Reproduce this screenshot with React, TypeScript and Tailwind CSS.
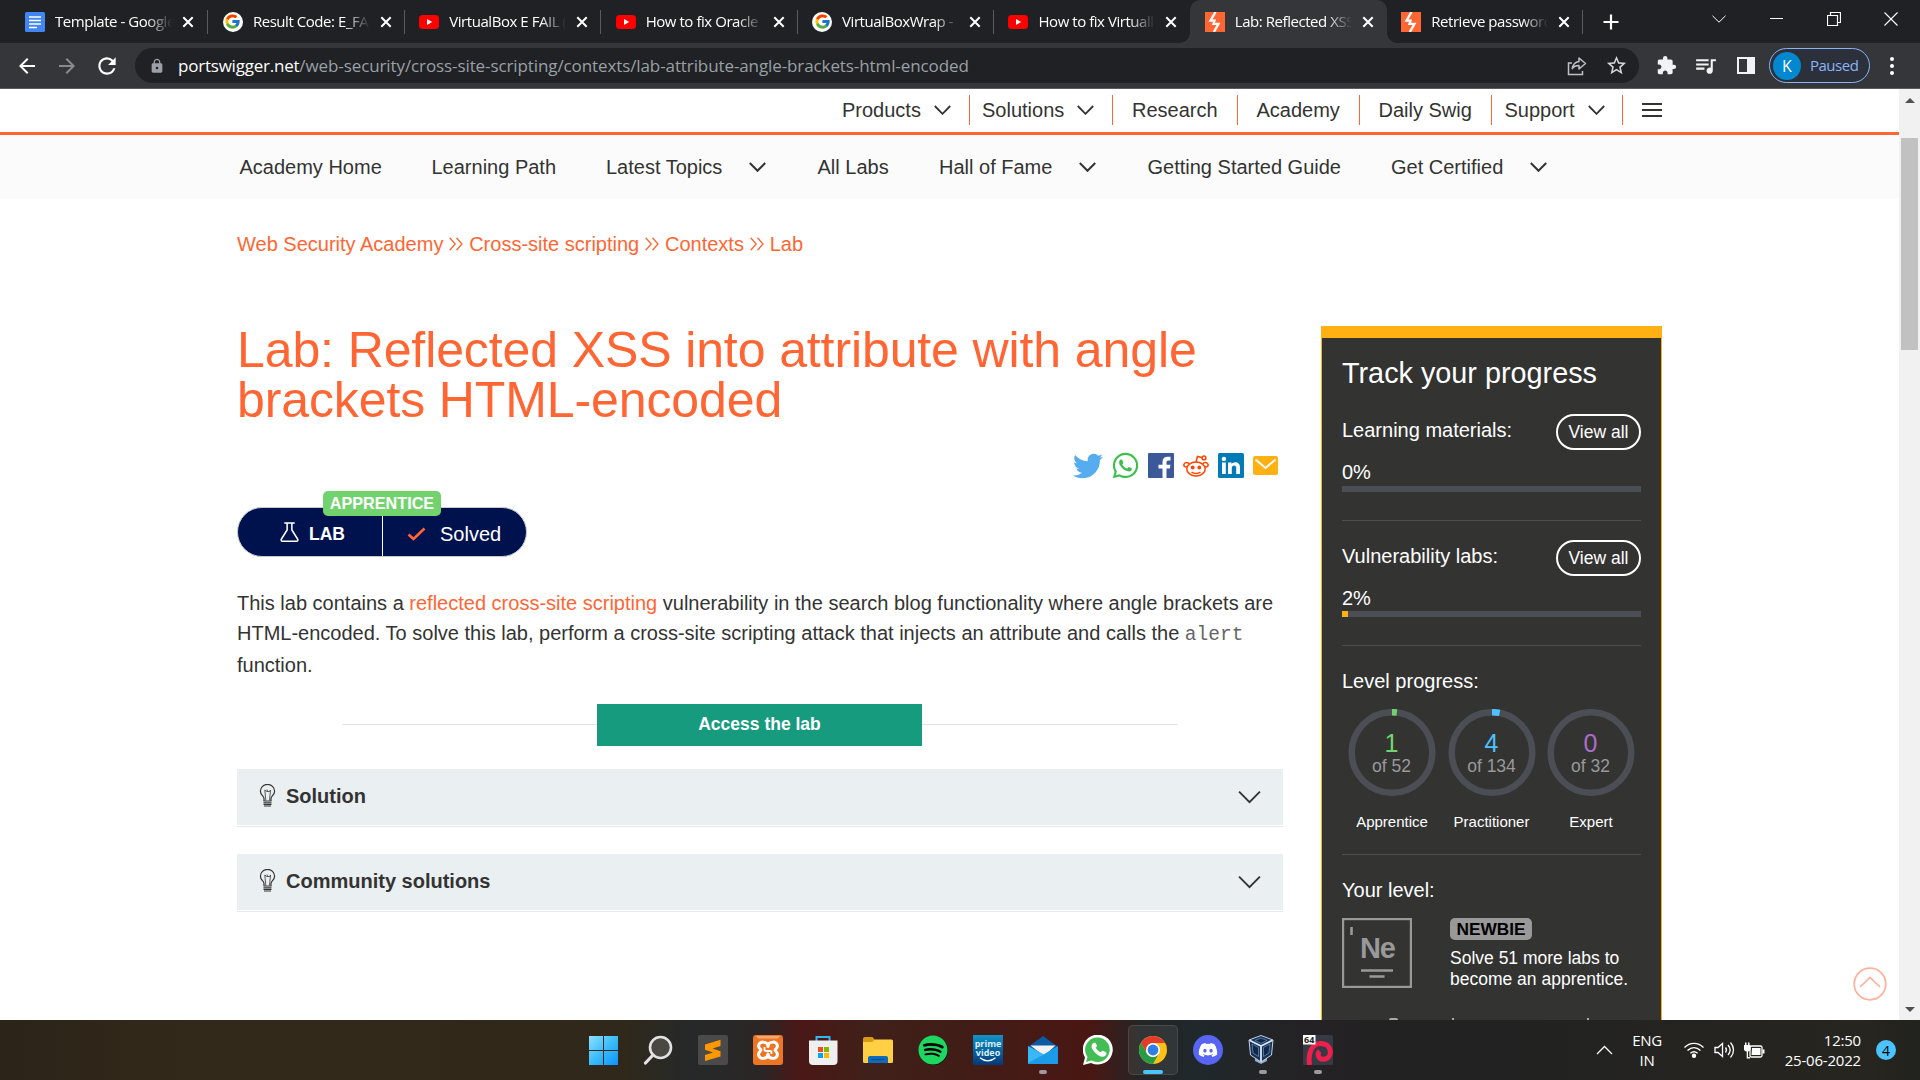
import React from "react";
import { FaTwitter, FaWhatsapp, FaSpotify, FaDiscord } from "react-icons/fa";
import { FcGoogle } from "react-icons/fc";
import { MdExtension, MdLock, MdQueueMusic, MdRefresh, MdStarBorder, MdArrowBack, MdArrowForward } from "react-icons/md";

const UI = "font-['Open_Sans','Noto_Sans',sans-serif]";

function DocsIcon() {
  return (
    <svg width="20" height="20" viewBox="0 0 20 20">
      <rect width="20" height="20" rx="1.5" fill="#4285f4" />
      <path d="M4 5h12M4 8.5h12M4 12h12M4 15.5h8" stroke="#fff" strokeWidth="1.7" />
    </svg>
  );
}
function GoogleIcon() {
  return (
    <span className="flex size-5 items-center justify-center rounded-full bg-white">
      <FcGoogle size={17} />
    </span>
  );
}
function YouTubeIcon() {
  return (
    <svg width="20" height="20" viewBox="0 0 20 20">
      <rect y="3" width="20" height="14" rx="3.5" fill="#f00" />
      <path d="M8 7l5.2 3L8 13z" fill="#fff" />
    </svg>
  );
}
function SwiggerIcon() {
  return (
    <svg width="20" height="20" viewBox="0 0 20 20">
      <rect width="20" height="20" fill="#ff6633" />
      <path d="M10.5 0L5.5 8.6h4l-1 3.2h5L8.8 20" fill="none" stroke="#fff" strokeWidth="2.3" />
    </svg>
  );
}

const tabs: { icon: React.ReactNode; title: string; active?: boolean; sep?: boolean }[] = [
  { icon: <DocsIcon />, title: "Template - Google", sep: true },
  { icon: <GoogleIcon />, title: "Result Code: E_FAIL", sep: true },
  { icon: <YouTubeIcon />, title: "VirtualBox E FAIL (", sep: true },
  { icon: <YouTubeIcon />, title: "How to fix Oracle", sep: true },
  { icon: <GoogleIcon />, title: "VirtualBoxWrap -", sep: true },
  { icon: <YouTubeIcon />, title: "How to fix Virtuall" },
  { icon: <SwiggerIcon />, title: "Lab: Reflected XSS", active: true },
  { icon: <SwiggerIcon />, title: "Retrieve password", sep: true },
];

function TabStrip() {
  return (
    <div className="flex h-[43px] bg-[#202124] pl-3">
      {tabs.map((t, i) => (
        <div
          key={t.title}
          className={
            t.active
              ? "relative flex w-[196.4px] shrink-0 items-center rounded-t-[10px] bg-[#35363a] pl-[14.5px]"
              : i === 0
                ? "relative flex w-[196.4px] shrink-0 items-center pl-[13px]"
                : "relative flex w-[196.4px] shrink-0 items-center pl-[14.5px]"
          }
        >
          {t.active && (
            <>
              <span className="absolute bottom-0 -left-2.5 size-2.5 bg-[radial-gradient(circle_at_0_0,transparent_9.5px,#35363a_10px)]" />
              <span className="absolute -right-2.5 bottom-0 size-2.5 bg-[radial-gradient(circle_at_100%_0,transparent_9.5px,#35363a_10px)]" />
            </>
          )}
          <span className="flex size-5 shrink-0">{t.icon}</span>
          <span className="ml-2.5 w-[117px] overflow-hidden text-[15px] tracking-[-0.45px] whitespace-nowrap text-white [mask-image:linear-gradient(to_right,#000_78%,transparent_100%)]">
            {t.title}
          </span>
          <svg className="ml-[10px] shrink-0" width="12" height="12" viewBox="0 0 12 12">
            <path d="M1.3 1.3l9.4 9.4M10.7 1.3l-9.4 9.4" stroke="#fff" strokeWidth="2" />
          </svg>
          {t.sep && <span className="absolute top-[10px] right-0 h-6 w-px bg-[#5a5c60]" />}
        </div>
      ))}
      <div className="flex w-[56px] items-center justify-center">
        <svg width="16" height="16" viewBox="0 0 16 16">
          <path d="M8 0.5v15M0.5 8h15" stroke="#fff" strokeWidth="2.2" />
        </svg>
      </div>
      <div className="mb-[6px] ml-[51px] flex flex-1 items-center text-white">
        <span className="flex w-[57.5px] justify-center">
          <svg width="14" height="8" viewBox="0 0 14 8"><path d="M.5 .8L7 7.2 13.5 .8" fill="none" stroke="currentColor" /></svg>
        </span>
        <span className="flex w-[57.5px] justify-center">
          <span className="h-px w-[13px] bg-white" />
        </span>
        <span className="flex w-[57.5px] justify-center">
          <svg width="14" height="14" viewBox="0 0 14 14"><path d="M.5 3.5h10v10h-10zM3.5 3V.5h10v10H11" fill="none" stroke="currentColor" strokeWidth="1.2" /></svg>
        </span>
        <span className="flex w-[57.5px] justify-center">
          <svg width="14" height="14" viewBox="0 0 14 14"><path d="M.5 .5l13 13M13.5 .5l-13 13" stroke="currentColor" strokeWidth="1.1" /></svg>
        </span>
      </div>
    </div>
  );
}

function Toolbar() {
  return (
    <div className="flex h-[46px] items-center border-b border-[#5b5c60] bg-[#35363a] text-white">
      <div className="flex w-[135px] items-center pl-[15px]">
        <MdArrowBack size={24} />
        <MdArrowForward size={24} className="ml-4 text-[#8a8b8e]" />
        <MdRefresh size={26} className="ml-[15px]" />
      </div>
      <div className="flex h-[35px] w-[1504px] items-center rounded-full bg-[#202124] pl-[14px]">
        <MdLock size={16} className="text-[#9aa0a6]" />
        <span className="ml-[13px] w-[800px] text-[17px] tracking-[-0.1px] whitespace-nowrap text-[#9aa0a6]">
          <span className="tracking-[-0.22px] text-white">portswigger.net</span>/web-security/cross-site-scripting/contexts/lab-attribute-angle-brackets-html-encoded
        </span>
        <svg className="ml-auto" width="20" height="20" viewBox="0 0 20 20" fill="none" stroke="#bdc1c6" strokeWidth="1.5">
          <path d="M5 7H1.5v11.5h14V15" />
          <path d="M12 2l6.5 5.5L12 13v-3.4c-3 0-5.200 .9-6.700 3.100 .5-4 2.800-6.700 6.700-7.300z" strokeLinejoin="round" />
        </svg>
        <MdStarBorder size={23} className="mr-[11px] ml-[18px] text-[#d5d7da]" />
      </div>
      <MdExtension size={21} className="ml-[17px] text-[#f1f3f4]" />
      <MdQueueMusic size={25} className="ml-[16px] text-[#f1f3f4]" />
      <span className="ml-[19px] box-border h-[17px] w-[18px] border-[2.5px] border-r-[8px] border-[#f1f3f4]" />
      <div className="ml-[14px] flex h-[35px] w-[101px] items-center rounded-full border-[1.500px] border-[#8ab4f8] bg-[#2c303a] pl-[3px]">
        <span className="flex size-7 items-center justify-center rounded-full bg-[#0288d1] text-[16px]">K</span>
        <span className="ml-[9px] text-[15px] tracking-[-0.5px] text-[#8ab4f8]">Paused</span>
      </div>
      <div className="ml-5 flex flex-col gap-[3px]">
        <span className="size-1 rounded-full bg-white" />
        <span className="size-1 rounded-full bg-white" />
        <span className="size-1 rounded-full bg-white" />
      </div>
    </div>
  );
}

function Down({ w = 17, h = 10, s = 1.8 }: { w?: number; h?: number; s?: number }) {
  return (
    <svg width={w} height={h} viewBox="0 0 17 10" className="shrink-0">
      <path d="M.8 1L8.500 8.800 16.200 1" fill="none" stroke="#333332" strokeWidth={s} />
    </svg>
  );
}

function TopNav() {
  return (
    <div className="flex h-[46px] border-b-[3px] border-[#ff6633] bg-white pt-[6px] pl-[842px] text-[20px] text-[#333332]">
      <div className="flex h-[30px] w-[128px] items-center border-r border-[#ff6633]">Products<span className="ml-[13px]"><Down /></span></div>
      <div className="flex h-[30px] w-[143px] items-center border-r border-[#ff6633] pl-3">Solutions<span className="ml-[13px]"><Down /></span></div>
      <div className="flex h-[30px] w-[125px] items-center border-r border-[#ff6633] pl-[19px]">Research</div>
      <div className="flex h-[30px] w-[122px] items-center border-r border-[#ff6633] pl-[18.5px]">Academy</div>
      <div className="flex h-[30px] w-[132px] items-center border-r border-[#ff6633] pl-[18.5px]">Daily Swig</div>
      <div className="flex h-[30px] w-[131px] items-center border-r border-[#ff6633] pl-[12.5px]">Support<span className="ml-[13px]"><Down /></span></div>
      <div className="ml-[19px] flex h-[30px] flex-col justify-center gap-[4px]">
        <span className="h-[2px] w-5 bg-[#333332]" />
        <span className="h-[2px] w-5 bg-[#333332]" />
        <span className="h-[2px] w-5 bg-[#333332]" />
      </div>
    </div>
  );
}

function SubNav() {
  return (
    <div className="flex h-16 items-center bg-[#fbfbfb] pl-[239.5px] text-[20px] whitespace-nowrap text-[#333332]">
      <span className="w-[192px]">Academy Home</span>
      <span className="w-[174.5px]">Learning Path</span>
      <span className="flex w-[211.5px] items-center">Latest Topics<span className="ml-[27px]"><Down s={2} /></span></span>
      <span className="w-[121.5px]">All Labs</span>
      <span className="flex w-[208.5px] items-center">Hall of Fame<span className="ml-[27px]"><Down s={2} /></span></span>
      <span className="w-[243.5px]">Getting Started Guide</span>
      <span className="flex items-center">Get Certified<span className="ml-[27px]"><Down s={2} /></span></span>
    </div>
  );
}

function Chevrons() {
  return (
    <svg width="14" height="14" viewBox="0 0 14 14" className="mx-[5.900px]">
      <path d="M.7 .7l5.500 6.300-5.500 6.300M7.500 .7L13 7l-5.500 6.300" fill="none" stroke="#ff6633" strokeWidth="1.300" />
    </svg>
  );
}

function Social() {
  return (
    <div className="mt-7 flex h-[25px] items-center pl-[836px]">
      <FaTwitter size={30} color="#55acee" className="shrink-0" />
      <FaWhatsapp size={29} color="#3cc04b" className="ml-2 shrink-0" />
      <svg className="ml-2 shrink-0" width="26" height="25" viewBox="0 0 26 25">
        <rect width="26" height="25" rx="1" fill="#3b5998" />
        <path d="M14.500 25v-9.500h-4v-3.800h4V9c0-3.500 2-5.200 5-5.200h3v3.600h-2c-1.600 0-2 .8-2 2v2.300h3.900l-.6 3.800h-3.300V25z" fill="#fff" />
      </svg>
      <svg className="ml-[9px] shrink-0" width="26" height="22" viewBox="0 0 26 22" fill="none" stroke="#ff4500" strokeWidth="1.500">
        <ellipse cx="13" cy="14" rx="9.200" ry="7" />
        <path d="M13 7l1.500-5.500 5 1.200M4.500 11.200C2.500 13 .4 11.300 1 9.300 1.800 7 5 7 6.200 8.700M21.500 11.200c2 1.800 4.100 .1 3.500-1.900C24.200 7 21 7 19.800 8.700M8.500 17c2.500 2 6.500 2 9 0" />
        <circle cx="21" cy="2.900" r="1.900" />
        <circle cx="9.700" cy="12.500" r="1.200" fill="#ff4500" />
        <circle cx="16.300" cy="12.500" r="1.200" fill="#ff4500" />
      </svg>
      <svg className="ml-[9px] shrink-0" width="26" height="25" viewBox="0 0 26 25">
        <rect width="26" height="25" rx="1.500" fill="#007bb5" />
        <path d="M4 9.500h3.800V21H4zM10 9.500h3.600v1.700c1.700-3 8.400-2.900 8.400 3V21h-3.800v-6c0-3.500-4.400-3.200-4.400 0v6H10z" fill="#fff" />
        <circle cx="5.900" cy="5.900" r="2.200" fill="#fff" />
      </svg>
      <svg className="ml-[9px] shrink-0" width="25" height="19" viewBox="0 0 25 19">
        <rect width="25" height="19" rx="2" fill="#ffb013" />
        <path d="M2.500 3.500l10 8.500 10-8.500" fill="none" stroke="#fff" strokeWidth="1.900" />
      </svg>
    </div>
  );
}

function LabBadge() {
  return (
    <div className="relative mt-[29px] flex h-[50px] w-[290px] items-center rounded-full border border-[#c5cbd0] bg-[#00124e] text-white">
      <div className="flex h-full w-[145px] items-center border-r border-white pl-[42px]">
        <svg width="19" height="20" viewBox="0 0 20 20" preserveAspectRatio="none" fill="none" stroke="#fff" strokeWidth="1.600">
          <path d="M4.500 1h11M7.500 1v7L1.500 17c-.8 1.300 0 2.200 1 2.200h15c1 0 1.800-.9 1-2.200l-6-9V1" />
        </svg>
        <span className="mt-1 ml-[10px] text-[17.500px] font-bold">LAB</span>
      </div>
      <svg className="mt-1 ml-[24px]" width="19" height="14" viewBox="0 0 19 14">
        <path d="M1.500 7.500l5 4.500L17.500 1.500" fill="none" stroke="#ff6633" strokeWidth="2.600" />
      </svg>
      <span className="mt-1 ml-[14px] text-[20px]">Solved</span>
      <span className="absolute -top-[17px] left-[85px] flex h-[25px] w-[118px] items-center justify-center rounded-[5px] bg-[#72d36e] text-[16.200px] font-bold">
        APPRENTICE
      </span>
    </div>
  );
}

function HintBox({ title }: { title: string }) {
  return (
    <div className="h-[58px] border-b border-[#e3e8ea]">
      <div className="flex h-14 items-center bg-[#eaeff2] pr-[22px] pl-[22px]">
        <svg className="mb-[3px]" width="17" height="23" viewBox="0 0 17 23" fill="none" stroke="#333332">
          <path d="M5 17v-2.500C4.800 12 1.400 11 1.400 7.200a7 6.700 0 0 1 14.200 0C15.600 11 12.200 12 12 14.500V17z" strokeWidth="1.200" />
          <path d="M6.800 16.500L5.800 6l2 1.500h2.800L11.500 6l-1 10.500M8 5.500l.5 2" strokeWidth=".8" />
          <path d="M4.500 18.700h8M4.500 20.400h8M5 22h7" strokeWidth="1.100" />
        </svg>
        <span className="mb-[3px] ml-[10px] text-[20px] font-bold text-[#333332]">{title}</span>
        <span className="ml-auto"><Down w={23} h={14} s={1.4} /></span>
      </div>
    </div>
  );
}

function Article() {
  return (
    <main className="ml-[237px] w-[1046px] shrink-0 pt-8 text-[#333332]">
      <div className="flex h-[26px] items-center text-[20px] whitespace-nowrap text-[#ff6633]">
        Web Security Academy<Chevrons />Cross-site scripting<Chevrons />Contexts<Chevrons />Lab
      </div>
      <h1 className="mt-[68px] text-[50px] leading-[50px] tracking-[-0.11px] whitespace-nowrap text-[#ff6633]">
        Lab: Reflected XSS into attribute with angle
        <br />
        brackets HTML-encoded
      </h1>
      <Social />
      <LabBadge />
      <p className="mt-[31px] text-[20px] whitespace-nowrap">
        <span className="block h-[30px] leading-[30px]">
          This lab contains a <span className="text-[#ff6633]">reflected cross-site scripting</span> vulnerability in the search blog functionality where angle brackets are
        </span>
        <span className="block h-8 leading-[30px]">
          HTML-encoded. To solve this lab, perform a cross-site scripting attack that injects an attribute and calls the{" "}
          <code className="font-['Liberation_Mono',monospace] text-[19.500px] leading-none text-[#666]">alert</code>
        </span>
        <span className="block h-[31px] leading-[30px]">function.</span>
      </p>
      <div className="mt-[23px] mb-[23px] flex h-[42px] items-center justify-center">
        <span className="mb-px h-px w-[255px] bg-[#e3e3e3]" />
        <span className="flex h-full w-[325px] items-center justify-center bg-[#169b7f] pb-[2px] text-[17.500px] font-bold text-white">Access the lab</span>
        <span className="mb-px h-px w-[256px] bg-[#e3e3e3]" />
      </div>
      <HintBox title="Solution" />
      <div className="h-[27px]" />
      <HintBox title="Community solutions" />
    </main>
  );
}

function ViewAll() {
  return (
    <span className="flex h-9 w-[85px] items-center justify-center rounded-full border-2 border-white text-[17.500px]">View all</span>
  );
}

function Ring({ n, of, color, arc }: { n: string; of: string; color: string; arc: number }) {
  return (
    <svg width="88" height="88" viewBox="0 0 88 88" className="shrink-0">
      <circle cx="44" cy="43.500" r="40.300" fill="none" stroke="#4b4e54" strokeWidth="6.500" />
      {arc > 0 && (
        <circle cx="44" cy="43.500" r="40.300" fill="none" stroke={color} strokeWidth="6.500" strokeDasharray={`${arc} 400`} transform="rotate(-90 44 43.5)" />
      )}
      <text x="43.500" y="43" textAnchor="middle" fontSize="25" fill={color}>{n}</text>
      <text x="43.500" y="63" textAnchor="middle" fontSize="17.500" fill="#999">{of}</text>
    </svg>
  );
}

function Sidebar() {
  return (
    <aside className="mt-[127px] ml-[38px] flex h-[694px] w-[341px] shrink-0 flex-col overflow-hidden border-x border-t-[12px] border-[#ffb013] bg-[#333332] px-5 text-[20px] leading-[26px] text-white">
      <div className="mt-[18px] h-[34px] text-[28.800px] leading-[34px] whitespace-nowrap">Track your progress</div>
      <div className="mt-6 flex h-9 justify-between"><span className="mt-[3px]">Learning materials:</span><ViewAll /></div>
      <div className="mt-[9px]">0%</div>
      <div className="mt-px h-[6px] shrink-0 bg-[#4b4e54]" />
      <div className="mt-7 h-px shrink-0 bg-[#4b4e54]" />
      <div className="mt-[19px] flex h-9 justify-between"><span className="mt-[3px]">Vulnerability labs:</span><ViewAll /></div>
      <div className="mt-[9px]">2%</div>
      <div className="flex h-[6px] shrink-0 bg-[#4b4e54]"><span className="w-[6px] bg-[#ffb013]" /></div>
      <div className="mt-7 h-px shrink-0 bg-[#4b4e54]" />
      <div className="mt-[22px]">Level progress:</div>
      <div className="mt-[15px] flex h-[87px] gap-[11.500px] pl-[6px]">
        <Ring n="1" of="of 52" color="#72d36e" arc={4.900} />
        <Ring n="4" of="of 134" color="#4fc1ff" arc={7.700} />
        <Ring n="0" of="of 32" color="#ab6dcb" arc={0} />
      </div>
      <div className="mt-4 flex h-5 gap-[11.500px] pl-[6px] text-[15px] leading-5">
        <span className="w-[88px] text-center">Apprentice</span>
        <span className="w-[88px] text-center">Practitioner</span>
        <span className="w-[88px] text-center">Expert</span>
      </div>
      <div className="mt-[22px] h-px shrink-0 bg-[#4b4e54]" />
      <div className="mt-[22px]">Your level:</div>
      <div className="mt-[15px] flex h-[70px]">
        <svg width="70" height="70" viewBox="0 0 70 70" className="shrink-0">
          <rect x="1" y="1" width="68" height="68" fill="none" stroke="#999" strokeWidth="2.400" />
          <path d="M9.500 9v8M19 52.500h32M27.500 58.500h15" stroke="#999" strokeWidth="2.600" />
          <text x="36" y="40" textAnchor="middle" fontSize="29" fontWeight="bold" fill="#999" textLength="36">Ne</text>
        </svg>
        <div className="ml-[38px] whitespace-nowrap">
          <span className="flex h-[22px] w-[82px] items-center justify-center rounded-[5px] bg-[#999] text-[17.300px] font-bold text-black">NEWBIE</span>
          <div className="mt-[8px] text-[17.500px] leading-[21px]">Solve 51 more labs to<br />become an apprentice.</div>
        </div>
      </div>
      <div className="mt-[30px] flex h-[2px] items-end pl-[47px]">
        <span className="h-[2px] w-[9px] rounded-t-full bg-[#aaa]" />
        <span className="ml-[54px] h-[2px] w-[2px] bg-[#aaa]" />
        <span className="ml-[133px] h-[2px] w-[2px] bg-[#aaa]" />
      </div>
    </aside>
  );
}

function Scrollbar() {
  return (
    <div className="flex w-[21px] shrink-0 flex-col items-center bg-[#f1f1f1]">
      <svg width="10" height="5" viewBox="0 0 10 5" className="mt-[9px]"><path d="M0 5L5 0l5 5z" fill="#505050" /></svg>
      <div className="mt-[35px] h-[212px] w-[17px] bg-[#c1c1c1]" />
      <svg width="10" height="5" viewBox="0 0 10 5" className="mt-auto mb-2"><path d="M0 0l5 5 5-5z" fill="#505050" /></svg>
    </div>
  );
}

const apps: { name: string; mark?: "dot" | "bar"; icon: React.ReactNode }[] = [
  {
    name: "start",
    icon: (
      <svg width="30" height="30" viewBox="0 0 30 30">
        <defs><linearGradient id="win" x1="0" y1="0" x2="1" y2="1" gradientUnits="objectBoundingBox"><stop offset="0" stopColor="#8fe0ff" /><stop offset=".5" stopColor="#3cbcf8" /><stop offset="1" stopColor="#0a93ff" /></linearGradient></defs>
        <path d="M1 1h14v14H1zM16 1h14v14H16zM1 16h14v14H1zM16 16h14v14H16z" fill="url(#win)" />
      </svg>
    ),
  },
  {
    name: "search",
    icon: (
      <svg width="30" height="30" viewBox="0 0 30 30" fill="none" stroke="#e2e2e4">
        <circle cx="17.500" cy="12.500" r="10.500" strokeWidth="2.600" fill="#4b4843" />
        <path d="M10 20l-7.500 8" strokeWidth="3.200" strokeLinecap="round" />
      </svg>
    ),
  },
  {
    name: "sublime",
    icon: (
      <svg width="30" height="30" viewBox="0 0 30 30">
        <rect width="30" height="30" rx="2" fill="#4a4a4a" />
        <path d="M22.500 4.800v6.200l-8 2.600 8 2.700v5.200L7 26v-6l8-2.600-8-2.700V9.500z" fill="#ff9800" />
      </svg>
    ),
  },
  {
    name: "xampp",
    icon: (
      <svg width="30" height="30" viewBox="0 0 30 30">
        <rect width="30" height="30" rx="3" fill="#ee7623" />
        <path d="M3 1h24l-2 2.500H5z" fill="#f6a873" />
        <path d="M15 11.500C14.500 6 6 5.500 5.500 11c0 2.500 2.500 3 2.500 4s-2.500 1.500-2.500 4.500C6 25 14.500 24.500 15 19c.5 5.500 9 6 9.500 .5C24.500 16.500 22 16 22 15s2.500-1.500 2.500-4C24 5.500 15.500 6 15 11.500z" fill="none" stroke="#fff" strokeWidth="3" strokeLinejoin="round" />
        <path d="M11.500 12v2.500c0 1 1 1.500 2 1.500h3c1 0 2 .5 2 1.500V19" fill="none" stroke="#fff" strokeWidth="1.800" />
      </svg>
    ),
  },
  {
    name: "store",
    icon: (
      <svg width="30" height="30" viewBox="0 0 30 30">
        <path d="M8.500 7V2h13v5" fill="none" stroke="#35b6f0" strokeWidth="2" />
        <path d="M1 5.500h28.500V26a4 4 0 0 1-4 4H5a4 4 0 0 1-4-4z" fill="#efefef" />
        <path d="M10 12h5v5h-5z" fill="#f04e1f" /><path d="M16 12h5v5h-5z" fill="#7fba00" />
        <path d="M10 18h5v5h-5z" fill="#00a4ef" /><path d="M16 18h5v5h-5z" fill="#ffb900" />
      </svg>
    ),
  },
  {
    name: "explorer",
    icon: (
      <svg width="30" height="30" viewBox="0 0 30 30">
        <path d="M0 4a2 2 0 0 1 2-2h7.500l3 3.500V10H0z" fill="#d99a12" />
        <path d="M0 7h9l3-2.500h16.500A1.500 1.500 0 0 1 30 6v20.500a1.500 1.500 0 0 1-1.500 1.500h-27A1.500 1.500 0 0 1 0 26.500z" fill="#ffcf44" />
        <path d="M5 28v-5a2 2 0 0 1 2-2h16a2 2 0 0 1 2 2v5z" fill="#0f6cbd" />
        <path d="M8.500 24.500h13" stroke="#0b4f91" strokeWidth="1.300" />
      </svg>
    ),
  },
  {
    name: "spotify",
    icon: (
      <span className="flex size-[29px] items-center justify-center rounded-full bg-black"><FaSpotify size={30} color="#1ed760" className="shrink-0" /></span>
    ),
  },
  {
    name: "prime",
    icon: (
      <span className="flex size-[30px] flex-col items-center bg-linear-to-b from-[#1394c4] to-[#07377a] pt-1 text-[9px] leading-[9px] font-bold text-[#d8f0fa]">
        <span>prime</span>
        <span>video</span>
        <svg width="18" height="5" viewBox="0 0 18 5"><path d="M1 .8c4.500 4 11 4 15.500 0" fill="none" stroke="#fff" strokeWidth="1.200" /></svg>
      </span>
    ),
  },
  {
    name: "mail",
    mark: "dot",
    icon: (
      <svg width="30" height="30" viewBox="0 0 30 30">
        <path d="M0 12L15 1l15 11v6H0z" fill="#0a5ba6" />
        <path d="M2.500 10.500h25L16 21z" fill="#f3f0ee" />
        <path d="M0 11l18 9.500L30 29H0z" fill="#38b8f5" />
        <path d="M30 11L13 21 0 28v1h30z" fill="#1c9be8" />
        <path d="M30 11L13 21 0 29z" fill="#50c8fb" opacity=".45" />
      </svg>
    ),
  },
  {
    name: "whatsapp",
    icon: (
      <svg width="30" height="30" viewBox="0 0 30 30">
        <path d="M0 30l2-7.500A15 15 0 1 1 8 28z" fill="#fff" />
        <path d="M3 27l1.500-5A12.300 12.300 0 1 1 8.500 25.500z" fill="#45bd55" />
        <path d="M10.500 8c-3 2-2.500 5 1 9s8 6 10.500 4 1.500-3.500 0-4.200l-2-1c-1-.5-1.500.5-2.300 1.400-2-.7-4-2.500-4.900-4.500.8-.8 1.500-1.300 1-2.400l-1-2c-.6-1.200-1.500-1.100-2.300-.3z" fill="#fff" />
      </svg>
    ),
  },
  {
    name: "chrome",
    mark: "bar",
    icon: (
      <svg width="28" height="28" viewBox="0 0 28 28">
        <circle cx="14" cy="14" r="14" fill="#fbc116" />
        <path d="M1.900 7A14 14 0 0 1 26.100 7H14a7 7 0 0 0-6 10.500z" fill="#e33b2e" />
        <path d="M1.900 7A14 14 0 0 0 14 28l6-10.500a7 7 0 0 1-12.100 0z" fill="#269b48" />
        <circle cx="14" cy="14" r="7" fill="#fff" />
        <circle cx="14" cy="14" r="5.400" fill="#2f7de9" />
      </svg>
    ),
  },
  {
    name: "discord",
    icon: (
      <span className="flex size-[30px] items-center justify-center rounded-full bg-[#5865f2]"><FaDiscord size={20} color="#fff" /></span>
    ),
  },
  {
    name: "virtualbox",
    mark: "dot",
    icon: (
      <svg width="30" height="30" viewBox="0 0 30 30">
        <path d="M7 23l6-3 6 3v3l-6 3-6-3z" fill="#93a9cd" />
        <path d="M1 5L13 .5 25 5l-1.500 15L13 27 2.500 20z" fill="#173358" stroke="#c5d3e6" strokeWidth="1" />
        <path d="M1.500 5.300L13 11l11.500-5.700M13 11v15.500" fill="none" stroke="#dbe6f2" strokeWidth="1.800" />
        <path d="M4 9l6.500 3.500v9L5 18zM22 9l-6.500 3.500v9L21 18zM13 3l6 2.400-6 3-6-3z" fill="#112747" stroke="#6487b0" strokeWidth=".8" />
      </svg>
    ),
  },
  {
    name: "pd64",
    mark: "dot",
    icon: (
      <svg width="30" height="30" viewBox="0 0 30 30">
        <rect width="30" height="30" rx="1.500" fill="#363a45" />
        <path d="M6.500 30C5 18 8.500 8.500 17.500 8.500c6.500 0 9.800 4 9.800 8.700 0 4.300-3.300 7-7.300 7-4.500 0-6.500-5-3.200-8" fill="none" stroke="#ee1f4b" strokeWidth="5" />
        <rect width="12.500" height="9.500" fill="#fff" />
        <text x="6.200" y="8.300" textAnchor="middle" fontSize="9" fontWeight="bold" fill="#222">64</text>
      </svg>
    ),
  },
];

function Taskbar() {
  return (
    <div className="flex h-[60px] items-center bg-[linear-gradient(90deg,#2c2419_0px,#33291a_200px,#30281a_620px,#262929_690px,#2b2626_760px,#4a1816_800px,#40201a_870px,#411d17_960px,#4a1713_1090px,#242626_1140px,#20282b_1200px,#242224_1300px,#222222_1500px,#26251f_1870px,#22221e_1920px)] pl-[575.5px] text-white">
      {apps.map((a) => (
        <div key={a.name} className="flex w-[55px] shrink-0 justify-center">
          <div
            className={
              a.mark === "bar"
                ? "relative flex size-[50px] items-center justify-center rounded-[5px] border border-white/10 bg-white/7"
                : "relative flex size-[50px] items-center justify-center"
            }
          >
            {a.icon}
            {a.mark === "dot" && <span className="absolute bottom-[1px] h-1 w-2 rounded-full bg-[#9b9b9b]" />}
            {a.mark === "bar" && <span className="absolute bottom-0 h-1 w-5 rounded-full bg-[#4cc2ff]" />}
          </div>
        </div>
      ))}
      <svg className="ml-[250.5px] shrink-0" width="17" height="10" viewBox="0 0 17 10"><path d="M1 9l7.500-7.500L16 9" fill="none" stroke="#fff" strokeWidth="1.300" /></svg>
      <div className="mb-px ml-[18px] w-[32px] text-center text-[15px] leading-[20px] tracking-[-0.3px]">ENG<br />IN</div>
      <svg className="ml-[20px] shrink-0" width="22" height="18" viewBox="0 0 22 18" fill="none" stroke="#fff" strokeWidth="1.400">
        <path d="M1.500 6.500c5.500-5.500 13.500-5.500 19 0M4.500 9.500c4-3.800 9-3.800 13 0M7.400 12.300c2.300-2 4.900-2 7.200 0" />
        <circle cx="11" cy="14.800" r="1.500" fill="#fff" />
      </svg>
      <svg className="ml-[9px] shrink-0" width="21" height="18" viewBox="0 0 21 18" fill="none" stroke="#fff" strokeWidth="1.300">
        <path d="M1 6.500h3L8.500 2.500v13L4 11.500H1zM11.500 6.500c1.200 1.500 1.200 3.500 0 5M14 4c2.600 3 2.600 7 0 10M16.500 1.500c4 4.500 4 10.500 0 15" />
      </svg>
      <svg className="ml-[9px] shrink-0" width="21" height="17" viewBox="0 0 21 17">
        <rect x="6" y="4" width="12" height="11" rx="1.500" fill="none" stroke="#fff" strokeWidth="1.300" />
        <path d="M8 6h8.500v7H7.500zM18.500 7.500h2v4h-2z" fill="#fff" />
        <path d="M0 3h6.500v4c0 1.500-1 2.500-2.500 2.500V15H6v1.500H2.700v-7C1 9.500 0 8.500 0 7z M1 .5h1.500V3H1zM4 .5h1.500V3H4z" fill="#fff" />
      </svg>
      <div className="mb-px ml-auto text-right text-[15px] leading-5 tracking-[-0.2px]">12:50<br />25-06-2022</div>
      <span className="mr-6 ml-[15px] flex size-5 items-center justify-center rounded-full bg-[#4cc2ff] text-[14px] text-black">4</span>
    </div>
  );
}

export default function App() {
  return (
    <div className={`flex h-[1080px] w-[1920px] flex-col overflow-hidden bg-white ${UI}`}>
      <TabStrip />
      <Toolbar />
      <div className="flex h-[931px] font-['Liberation_Sans',Arial,sans-serif]">
        <div className="relative w-[1899px] overflow-hidden">
          <TopNav />
          <SubNav />
          <div className="flex">
            <Article />
            <Sidebar />
          </div>
          <svg className="absolute right-[12px] bottom-[19px]" width="34" height="34" viewBox="0 0 34 34" fill="none" stroke="#ffb199" strokeWidth="1.700">
            <circle cx="17" cy="17" r="15.800" />
            <path d="M7 20l10-9.500L27 20" />
          </svg>
        </div>
        <Scrollbar />
      </div>
      <Taskbar />
    </div>
  );
}
